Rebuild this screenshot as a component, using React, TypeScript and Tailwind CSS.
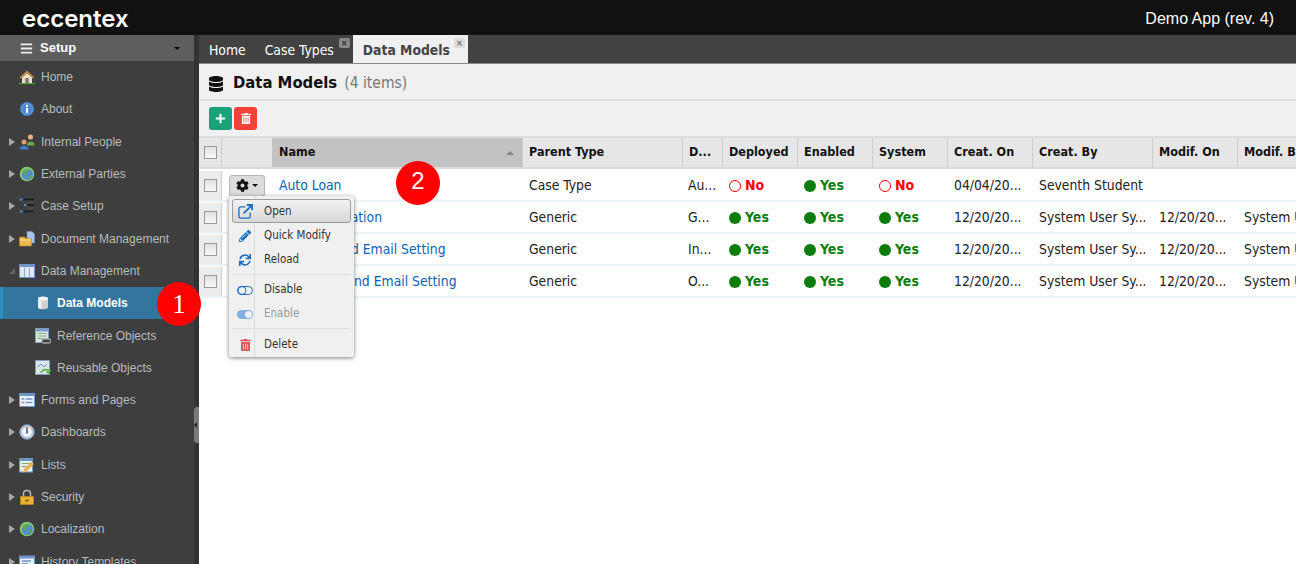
import { FaBars, FaCog, FaDatabase, FaPencilAlt, FaPlus, FaSync, FaTrashAlt } from 'react-icons/fa';
import type { ReactNode } from 'react';

const SANS = "font-['Liberation_Sans',Arial,sans-serif]";
const DEJA = "font-['DejaVu_Sans_Condensed','DejaVu_Sans',Verdana,sans-serif]";

// Small desktop-style icons for the tree
const ICONS: Record<string, ReactNode> = {
  home: (
    <>
      <path d="M.5 8.500 8 1.500l7.500 7-1.200 1L8 4 1.700 9.500Z" fill="#c9893f" />
      <path d="M3 8.500 8 4.300l5 4.200V14H3Z" fill="#eadfca" />
      <rect x="6.300" y="9" width="3.400" height="5" fill="#777" />
      <rect x="0" y="14" width="16" height="1.200" fill="#4f9e38" />
    </>
  ),
  about: (
    <>
      <circle cx="8" cy="8" r="6.800" fill="#5f97d8" stroke="#3d6fae" />
      <circle cx="8" cy="8" r="4.800" fill="#4f86cc" />
      <rect x="7" y="3.800" width="2" height="2" fill="#fff" />
      <rect x="7" y="6.800" width="2" height="5.200" fill="#fff" />
    </>
  ),
  people: (
    <>
      <circle cx="11.500" cy="3" r="2.500" fill="#e8b878" />
      <path d="M8 10c0-3.500 7-3.500 7.500 0v1.500H8Z" fill="#6aa84f" />
      <circle cx="5" cy="8" r="2.500" fill="#e39a6f" />
      <path d="M.5 15.500c0-5 9-5 9 0Z" fill="#3f7fd0" />
    </>
  ),
  globe: (
    <>
      <circle cx="8" cy="8" r="7.300" fill="#86c56e" />
      <circle cx="8.500" cy="8.500" r="5.500" fill="#4f8fd0" />
      <path d="M4 6c2-3 5-3.500 6-2s-2 2-2.500 4-3.500 1-3.500-2Zm6.500 3.500c2-1 3.500 0 2.500 1.500s-3 2.500-3 1Z" fill="#5fa848" />
    </>
  ),
  tree: (
    <>
      <circle cx="2" cy="1.500" r="1.200" fill="#4f8fe0" />
      <circle cx="6" cy="7" r="1.200" fill="#4f8fe0" />
      <circle cx="2" cy="13.500" r="1.200" fill="#4f8fe0" />
      <path d="M5 1.500h10M9 7h6M5 13.500h9" stroke="#1a1a1a" strokeWidth="1.300" />
      <path d="M8 4.500h7M8 10h6" stroke="#555" />
    </>
  ),
  docs: (
    <>
      <path d="M8 .5h5l2.500 2.500v9H8Z" fill="#a9c4ea" stroke="#6e92c4" strokeWidth=".6" />
      <path d="M.5 6h5L7 7.500h5.500V15H.5Z" fill="#eeb64c" stroke="#b9862c" strokeWidth=".6" />
      <path d="M1 9h11" stroke="#fbe3a2" />
    </>
  ),
  table: (
    <>
      <rect x=".5" y="1.500" width="15" height="13" fill="#dfe8f4" stroke="#6f95c8" />
      <rect x=".5" y="1.500" width="15" height="2.500" fill="#6f95c8" />
      <path d="M5.500 4.500v10M10.500 4.500v10" stroke="#8faad0" />
    </>
  ),
  cylinder: (
    <>
      <path d="M3 3.500v9c0 2.400 10 2.400 10 0v-9Z" fill="#cfcfcf" />
      <ellipse cx="8" cy="3.500" rx="5" ry="2" fill="#f4f4f4" />
      <path d="M3 5v7c0 1.500 2 2 3.500 2V5Z" fill="#eeeeee" />
    </>
  ),
  reference: (
    <>
      <rect x=".5" y=".5" width="13" height="14" fill="#dbe6f3" stroke="#7f9cc4" />
      <rect x=".5" y=".5" width="13" height="3" fill="#7f9cc4" />
      <path d="M2.500 5.500h9M2.500 8h9M2.500 10.500h5" stroke="#88b070" />
      <rect x="7" y="11" width="8.500" height="4" rx="1.500" fill="#3e3e3e" stroke="#a0a0a0" strokeWidth="1.300" />
    </>
  ),
  reusable: (
    <>
      <rect x=".5" y=".5" width="14" height="14" fill="#dbe6f3" stroke="#7f9cc4" />
      <path d="M2.500 7 6 4l3 3 3-3" stroke="#6a8fc0" fill="none" />
      <path d="M6 13c1-3 4-4 8-3M15.500 9.500l-2 3.500-2-1.500" stroke="#5fb043" strokeWidth="1.600" fill="none" />
    </>
  ),
  forms: (
    <>
      <rect x=".5" y="1.500" width="15" height="13" fill="#f0f4fa" stroke="#6f95c8" />
      <rect x=".5" y="1.500" width="15" height="2.500" fill="#6f95c8" />
      <path d="M2.500 7h3M2.500 10.500h3M7 7h6.500M7 10.500h6.500" stroke="#6f95c8" strokeWidth="1.500" />
    </>
  ),
  dash: (
    <>
      <circle cx="8" cy="8" r="7.200" fill="#b9c9dc" stroke="#8aa4c4" />
      <circle cx="8" cy="8" r="4.800" fill="#f2f2f2" />
      <path d="M8 3.500v6" stroke="#4f7fc0" strokeWidth="2" />
      <path d="M8 3.500v2" stroke="#d9603f" strokeWidth="2" />
    </>
  ),
  lists: (
    <>
      <rect x=".5" y="1.500" width="13" height="13.500" fill="#e6eef8" stroke="#6f95c8" />
      <rect x=".5" y="1.500" width="13" height="2.500" fill="#6f95c8" />
      <path d="M2.500 6.500h9M2.500 9.500h5" stroke="#7fae62" />
      <path d="m4 15.500 1-3.500 7.500-7.500 2.500 2.500-7.500 7.500Z" fill="#e8b448" />
    </>
  ),
  lock: (
    <>
      <path d="M4.500 8V4.500c0-4 7-4 7 0V8" fill="none" stroke="#b8b8b8" strokeWidth="1.500" />
      <rect x="1.500" y="7.500" width="13" height="8" fill="#eeb135" stroke="#c88f22" strokeWidth=".6" />
      <rect x="6.300" y="10.500" width="3.400" height="2" fill="#8a6414" />
    </>
  ),
  history: (
    <>
      <rect x=".5" y="2" width="15" height="12" fill="#e6eef8" stroke="#6f95c8" />
      <rect x=".5" y="2" width="15" height="2.500" fill="#6f95c8" />
      <path d="M3 7h9M3 10h6" stroke="#6f95c8" strokeWidth="1.500" />
    </>
  ),
};

const NAV = [
  { label: 'Home', icon: 'home', indent: 0 },
  { label: 'About', icon: 'about', indent: 0 },
  { label: 'Internal People', icon: 'people', indent: 0, arrow: 'closed' },
  { label: 'External Parties', icon: 'globe', indent: 0, arrow: 'closed' },
  { label: 'Case Setup', icon: 'tree', indent: 0, arrow: 'closed' },
  { label: 'Document Management', icon: 'docs', indent: 0, arrow: 'closed' },
  { label: 'Data Management', icon: 'table', indent: 0, arrow: 'open' },
  { label: 'Data Models', icon: 'cylinder', indent: 1, active: true },
  { label: 'Reference Objects', icon: 'reference', indent: 1 },
  { label: 'Reusable Objects', icon: 'reusable', indent: 1 },
  { label: 'Forms and Pages', icon: 'forms', indent: 0, arrow: 'closed' },
  { label: 'Dashboards', icon: 'dash', indent: 0, arrow: 'closed' },
  { label: 'Lists', icon: 'lists', indent: 0, arrow: 'closed' },
  { label: 'Security', icon: 'lock', indent: 0, arrow: 'closed' },
  { label: 'Localization', icon: 'globe', indent: 0, arrow: 'closed' },
  { label: 'History Templates', icon: 'history', indent: 0, arrow: 'closed' },
];

const COLS = [
  { label: 'Parent Type', w: 'w-[160px]' },
  { label: 'D...', w: 'w-[40px]' },
  { label: 'Deployed', w: 'w-[75px]' },
  { label: 'Enabled', w: 'w-[75px]' },
  { label: 'System', w: 'w-[75px]' },
  { label: 'Creat. On', w: 'w-[85px]' },
  { label: 'Creat. By', w: 'w-[120px]' },
  { label: 'Modif. On', w: 'w-[85px]' },
  { label: 'Modif. By', w: 'w-[80px]' },
];

const ROWS = [
  { name: 'Auto Loan', parent: 'Case Type', d: 'Au...', dep: false, en: true, sys: false, on: '04/04/20...', by: 'Seventh Student', mon: '', mby: '' },
  { name: 'Loan Application', parent: 'Generic', d: 'G...', dep: true, en: true, sys: true, on: '12/20/20...', by: 'System User Sy...', mon: '12/20/20...', mby: 'System User' },
  { name: 'Mail Inbound Email Setting', parent: 'Generic', d: 'In...', dep: true, en: true, sys: true, on: '12/20/20...', by: 'System User Sy...', mon: '12/20/20...', mby: 'System User' },
  { name: 'Mail Outbound Email Setting', parent: 'Generic', d: 'O...', dep: true, en: true, sys: true, on: '12/20/20...', by: 'System User Sy...', mon: '12/20/20...', mby: 'System User' },
];

function Flag({ on }: { on: boolean }) {
  return (
    <span className={`flex items-center gap-[4px] font-bold text-[14px] ${on ? 'text-[#0a7d0a]' : 'text-[#ff0000]'}`}>
      <span className={`w-[12px] h-[12px] rounded-full ${on ? 'bg-[#0a7d0a]' : 'border border-[#ff0000]'}`} />
      {on ? 'Yes' : 'No'}
    </span>
  );
}

function Check() {
  return <span className="block w-[13px] h-[13px] border border-[#9a9a9a] bg-gradient-to-b from-[#e0e0e0] to-[#fafafa]" />;
}

function Badge({ n, className }: { n: number; className: string }) {
  return (
    <div className={`absolute w-[44px] h-[44px] rounded-full bg-[#ff0000] text-white flex items-center justify-center ${className}`}>
      {n}
    </div>
  );
}

function MenuItem({ icon, label, muted, selected }: { icon: ReactNode; label: string; muted?: boolean; selected?: boolean }) {
  return (
    <div className={`relative flex items-center h-[24px] pt-[1px] ${selected ? 'rounded-[3px] border border-[#9c9c9c] bg-gradient-to-b from-[#f2f2f2] to-[#d8d8d8]' : ''}`}>
      <span className={`flex justify-center shrink-0 w-[24px] ${selected ? '' : 'ml-[1px]'}`}>{icon}</span>
      <span className={`ml-[7px] ${muted ? 'text-[#9a9a9a]' : 'text-[#333]'}`}>{label}</span>
    </div>
  );
}

function Sidebar() {
  return (
    <aside className={`relative w-[199px] shrink-0 bg-[#333] overflow-hidden ${SANS}`}>
      <div className="w-[194px] h-[26px] bg-[#5e5e5e] flex items-center text-white text-[13px] font-bold pl-[20px]">
        <FaBars className="w-[13px] h-[13px] text-[#eee]" />
        <span className="ml-[7px] flex-1">Setup</span>
        <span className="mr-[14px] border-x-[3px] border-x-transparent border-t-[3px] border-t-black" />
      </div>
      <div className="w-[194px] bg-[#3e3e3e]">
        {NAV.map((n) => (
          <div
            key={n.label}
            className={`flex items-center h-[32.300px] text-[12px] ${n.active ? 'bg-[#33759f] border-l-[3px] border-[#2b8fc4] text-white font-bold' : 'text-[#b6bcbf]'}`}
          >
            <span className={`shrink-0 ${n.active ? 'w-[6px]' : 'w-[9px]'}`} />
            <span className="w-[10px] flex shrink-0 items-center">
              {n.arrow === 'closed' && <span className="border-y-[4.500px] border-y-transparent border-l-[6px] border-l-[#a8a8a8]" />}
              {n.arrow === 'open' && <span className="border-b-[6px] border-l-[6px] border-b-[#666] border-l-transparent" />}
            </span>
            <svg viewBox="0 0 16 16" className={`w-[16px] h-[16px] shrink-0 ${n.indent ? 'ml-[16px]' : ''}`}>
              {ICONS[n.icon]}
            </svg>
            <span className="ml-[6px] whitespace-nowrap">{n.label}</span>
          </div>
        ))}
      </div>
      {/* splitter grip */}
      <div className="absolute left-[194px] top-[372px] w-[5px] h-[36px] bg-[#7a7a7a] rounded-l-[3px] flex items-center">
        <span className="border-y-[3px] border-y-transparent border-r-[3px] border-r-[#222]" />
      </div>
    </aside>
  );
}

function Grid() {
  return (
    <div className={`text-[13.800px] text-[#222] ${DEJA} w-[1097px]`}>
      <div className="flex h-[33px] bg-[#e6e6e6] border-y-2 border-[#dcdcdc] font-bold text-[12.500px] text-[#111]">
        <div className="w-[23px] shrink-0 border-r border-[#cfcfcf] flex items-center justify-center">
          <Check />
        </div>
        <div className="w-[50px] shrink-0" />
        <div className="w-[251px] shrink-0 bg-[#c2c2c2] flex items-center justify-between pl-[7px] pr-[8px] border-r border-[#cfcfcf]">
          <span>Name</span>
          <span className="border-x-[4px] border-x-transparent border-b-[4px] border-b-[#888]" />
        </div>
        {COLS.map((c) => (
          <div key={c.label} className={`${c.w} shrink-0 flex items-center pl-[6px] border-r border-[#cfcfcf] whitespace-nowrap overflow-hidden`}>
            {c.label}
          </div>
        ))}
      </div>
      <div className="mt-[1px]">
        {ROWS.map((r, i) => (
          <div key={r.name} className="flex h-[32px] border-b-2 border-[#eef3f7] bg-white items-stretch pt-[1px]">
            <div className="w-[23px] shrink-0 bg-[#ececec] border-r border-[#cfcfcf] flex items-center justify-center">
              <Check />
            </div>
            <div className="w-[50px] shrink-0 flex items-center pl-[7px]">
              {i === 0 && (
                <span className="w-[36px] h-[22px] rounded-[3px] border border-[#b5b5b5] bg-[#dcdcdc] flex items-center justify-center gap-[3px]">
                  <FaCog className="w-[13px] h-[13px] text-[#111]" />
                  <span className="border-x-[3px] border-x-transparent border-t-[3px] border-t-[#111]" />
                </span>
              )}
            </div>
            <div className="w-[250px] shrink-0 flex items-center pl-[7px] text-[#0b62b5] whitespace-nowrap">{r.name}</div>
            <div className="w-[160px] shrink-0 flex items-center pl-[7px]">{r.parent}</div>
            <div className="w-[40px] shrink-0 flex items-center pl-[6px]">{r.d}</div>
            <div className="w-[75px] shrink-0 flex items-center pl-[7px]"><Flag on={r.dep} /></div>
            <div className="w-[75px] shrink-0 flex items-center pl-[7px]"><Flag on={r.en} /></div>
            <div className="w-[75px] shrink-0 flex items-center pl-[7px]"><Flag on={r.sys} /></div>
            <div className="w-[85px] shrink-0 flex items-center pl-[7px] whitespace-nowrap">{r.on}</div>
            <div className="w-[120px] shrink-0 flex items-center pl-[7px] whitespace-nowrap">{r.by}</div>
            <div className="w-[85px] shrink-0 flex items-center pl-[7px] whitespace-nowrap">{r.mon}</div>
            <div className="w-[80px] shrink-0 flex items-center pl-[7px] whitespace-nowrap">{r.mby}</div>
          </div>
        ))}
      </div>
    </div>
  );
}

export default function App() {
  return (
    <div className="relative w-[1296px] h-[564px] overflow-hidden bg-white flex flex-col">
      <header className="h-[35px] shrink-0 bg-[#111] flex items-center justify-between pl-[22px] pr-[22px] pt-[3px]">
        <span className="font-['Inter',sans-serif] text-white text-[24px] font-semibold leading-none">eccentex</span>
        <span className={`text-white text-[16px] ${SANS}`}>Demo App (rev. 4)</span>
      </header>
      <div className="flex flex-1 min-h-0">
        <Sidebar />
        <main className="flex-1 min-w-0 overflow-hidden">
          <div className={`h-[29px] bg-[#424242] flex items-end border-b border-[#888] ${DEJA} text-[13.800px]`}>
            <span className="h-[28px] flex items-center pl-[10px] pr-[9px] pt-[3px] text-white">Home</span>
            <span className="relative h-[28px] flex items-center pl-[10px] pr-[19px] pt-[3px] text-white">
              Case Types
              <span className="absolute right-[3px] top-[3px] w-[11px] h-[10px] rounded-[2px] bg-[#888] text-[#333] text-[9px] leading-[10px] text-center font-bold">×</span>
            </span>
            <span className="relative h-[29px] bg-[#f0f0f0] flex items-center pl-[10px] pr-[18px] pt-[3px] text-[#444] font-bold">
              Data Models
              <span className="absolute right-[3px] top-[4px] w-[11px] h-[10px] rounded-[2px] bg-[#ddd] text-[#777] text-[9px] leading-[10px] text-center font-bold">×</span>
            </span>
          </div>
          <div className={`h-[37px] bg-[#f0f0f0] border-b-2 border-[#e0e0e0] flex items-center pl-[10px] pt-[4px] ${DEJA}`}>
            <FaDatabase className="w-[14px] h-[16px] text-[#111]" />
            <span className="ml-[10px] text-[16.500px] font-bold text-[#111]">Data Models</span>
            <span className="ml-[7px] text-[15.500px] text-[#777]">(4 items)</span>
          </div>
          <div className="h-[35px] bg-[#f0f0f0] flex items-center pl-[10px] gap-[2px]">
            <span className="w-[23px] h-[23px] rounded-[3px] bg-[#1ca27a] flex items-center justify-center">
              <FaPlus className="w-[11px] h-[11px] text-white" />
            </span>
            <span className="w-[23px] h-[23px] rounded-[3px] bg-[#f44336] flex items-center justify-center">
              <FaTrashAlt className="w-[10px] h-[11px] text-white" />
            </span>
          </div>
          <Grid />
        </main>
      </div>

      {/* row action dropdown */}
      <div className={`absolute left-[229px] top-[196px] w-[125px] h-[161px] bg-[#f0f0f0] rounded-[2px] shadow-[0_1px_4px_rgba(0,0,0,0.5)] px-[3px] py-[3px] text-[11.500px] ${DEJA}`}>
        <div className="absolute left-[25px] top-0 bottom-0 w-px bg-[#dcdcdc]" />
        <MenuItem
          selected
          icon={
            <svg viewBox="0 0 16 16" className="w-[15px] h-[15px]" fill="none" stroke="#1a6fc0">
              <path d="M8 3H3a2 2 0 0 0-2 2v8a2 2 0 0 0 2 2h8a2 2 0 0 0 2-2V9" strokeWidth="1.400" />
              <path d="m6 10 8-8M9.500 1H15v5.500" strokeWidth="2" />
            </svg>
          }
          label="Open"
        />
        <MenuItem icon={<FaPencilAlt className="w-[12px] h-[12px] text-[#1a6fc0]" />} label="Quick Modify" />
        <MenuItem icon={<FaSync className="w-[12px] h-[12px] text-[#1a6fc0]" />} label="Reload" />
        <div className="h-[6.500px] flex items-center"><div className="h-px w-full bg-[#dddddd]" /></div>
        <MenuItem
          icon={
            <svg viewBox="0 0 16 9" className="w-[16px] h-[9px]">
              <rect x=".5" y=".5" width="15" height="8" rx="4" fill="none" stroke="#1a6fc0" />
              <circle cx="5" cy="4.500" r="4" fill="none" stroke="#1a6fc0" />
            </svg>
          }
          label="Disable"
        />
        <MenuItem
          muted
          icon={
            <svg viewBox="0 0 16 9" className="w-[16px] h-[9px]">
              <rect width="16" height="9" rx="4.500" fill="#7fb2e0" />
              <circle cx="11.500" cy="4.500" r="3.500" fill="#f0f0f0" />
            </svg>
          }
          label="Enable"
        />
        <div className="h-[6.500px] flex items-center"><div className="h-px w-full bg-[#dddddd]" /></div>
        <MenuItem icon={<FaTrashAlt className="w-[11px] h-[12px] text-[#d9555a]" />} label="Delete" />
      </div>

      <Badge n={1} className="left-[157px] top-[282px] text-[27px] font-['Liberation_Serif',serif]" />
      <Badge n={2} className={`left-[396px] top-[161px] text-[24px] pb-[4px] ${SANS}`} />
    </div>
  );
}
